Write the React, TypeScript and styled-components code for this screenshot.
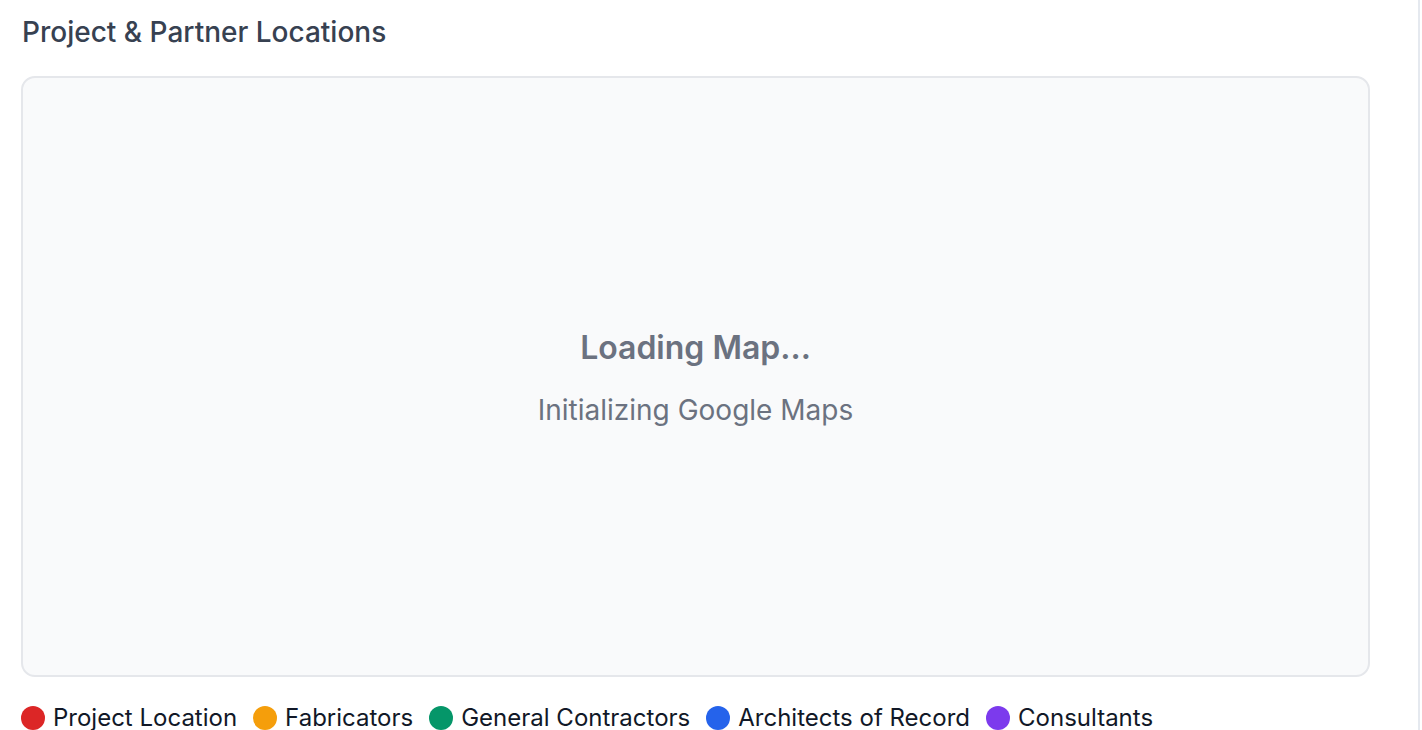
import React from "react";
import styled, { createGlobalStyle } from "styled-components";

const GlobalStyle = createGlobalStyle`
  html, body {
    margin: 0;
    padding: 0;
    background: #ffffff;
    font-family: Inter, "Noto Sans", "Liberation Sans", sans-serif;
  }
`;

type LegendKind = "project" | "fabricator" | "contractor" | "architect" | "consultant";

const legendColors: Record<LegendKind, string> = {
  project: "#dc2626",
  fabricator: "#f59e0b",
  contractor: "#059669",
  architect: "#2563eb",
  consultant: "#7c3aed",
};

const legend: { kind: LegendKind; label: string }[] = [
  { kind: "project", label: "Project Location" },
  { kind: "fabricator", label: "Fabricators" },
  { kind: "contractor", label: "General Contractors" },
  { kind: "architect", label: "Architects of Record" },
  { kind: "consultant", label: "Consultants" },
];

const Page = styled.div`
  width: 1420px;
  height: 730px;
  box-sizing: border-box;
  border-right: 2px solid #e5e9ef;
  padding: 14px 0 0 21px;
  overflow: hidden;
`;

const Section = styled.section`
  width: 1349px;
  display: flex;
  flex-direction: column;
`;

const Heading = styled.h2`
  margin: 0 0 26px 1px;
  font-size: 28px;
  line-height: 36px;
  font-weight: 500;
  color: #374151;
`;

const MapFrame = styled.div`
  height: 601px;
  box-sizing: border-box;
  border: 2px solid #e5e7eb;
  border-radius: 14px;
  background: #f9fafb;
  display: flex;
  flex-direction: column;
  align-items: center;
  justify-content: center;
  padding-top: 2px;
`;

const LoadingTitle = styled.div`
  font-size: 32px;
  line-height: 40px;
  font-weight: 600;
  color: #6b7280;
  margin-bottom: 24px;
`;

const LoadingText = styled.div`
  font-size: 28px;
  line-height: 36px;
  color: #6b7280;
`;

const Legend = styled.ul`
  list-style: none;
  margin: 24px 0 0;
  padding: 0;
  display: flex;
  gap: 16px;
`;

const LegendItem = styled.li`
  display: flex;
  align-items: center;
  gap: 8px;
  font-size: 24px;
  line-height: 34px;
  color: #111827;
`;

const Dot = styled.span<{ $kind: LegendKind }>`
  width: 24px;
  height: 24px;
  border-radius: 50%;
  background: ${({ $kind }) => legendColors[$kind]};
  flex-shrink: 0;
`;

export default function App() {
  return (
    <>
      <GlobalStyle />
      <Page>
        <Section>
          <Heading>Project &amp; Partner Locations</Heading>
          <MapFrame>
            <LoadingTitle>Loading Map...</LoadingTitle>
            <LoadingText>Initializing Google Maps</LoadingText>
          </MapFrame>
          <Legend>
            {legend.map((item) => (
              <LegendItem key={item.kind}>
                <Dot $kind={item.kind} />
                {item.label}
              </LegendItem>
            ))}
          </Legend>
        </Section>
      </Page>
    </>
  );
}
